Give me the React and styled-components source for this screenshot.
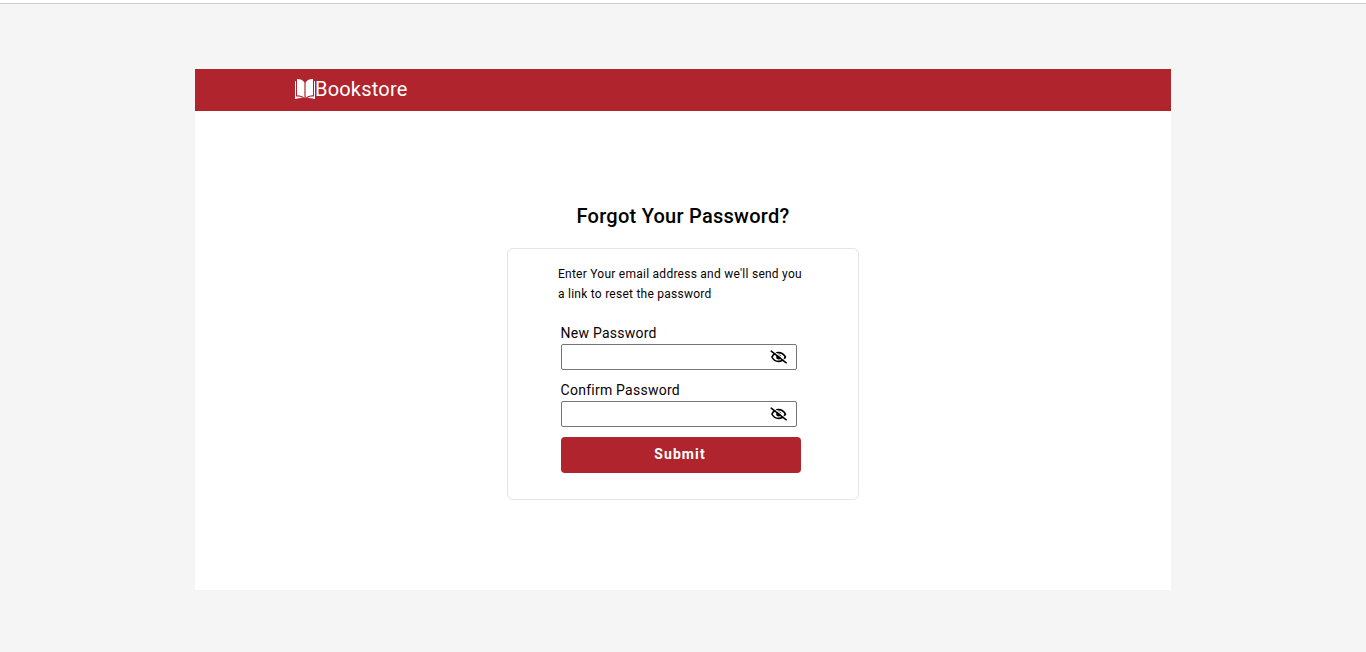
import React from "react";
import styled, { createGlobalStyle } from "styled-components";

const GlobalStyle = createGlobalStyle`
  * { box-sizing: border-box; }
  body {
    margin: 0;
    background: #f5f5f5;
    color: #0a0102;
    font-family: Roboto, "Liberation Sans", sans-serif;
  }
`;

const Page = styled.div`
  height: 652px;
  overflow: hidden;
  border-top: 3px solid #fff;
`;

const Backdrop = styled.div`
  height: 649px;
  padding: 65px 195px 0;
  border-top: 1px solid #cbcbcb;
  background: #f5f5f5;
`;

const Panel = styled.main`
  width: 976px;
  height: 521px;
  background: #fff;
`;

const Header = styled.header`
  display: flex;
  align-items: center;
  height: 42px;
  padding: 0 100px 2px;
  background: #b0242d;
  color: #fff;
`;

const BrandName = styled.span`
  font-size: 20px;
  line-height: 24px;
  letter-spacing: 0.2px;
`;

const Content = styled.section`
  display: flex;
  flex-direction: column;
  align-items: center;
  padding-top: 93px;
`;

const Title = styled.h1`
  margin: 0 0 20px;
  font-size: 20px;
  font-weight: 500;
  line-height: 24px;
  letter-spacing: 0.26px;
  color: #000;
`;

const Card = styled.form`
  width: 352px;
  height: 252px;
  padding: 15px 50px 0;
  border: 1px solid #e4e4e4;
  border-radius: 6px;
`;

const Hint = styled.p`
  margin: 0 0 19px;
  font-size: 12px;
  line-height: 20px;
  letter-spacing: 0.25px;
  white-space: nowrap;
`;

const Field = styled.div`
  display: flex;
  flex-direction: column;
  margin: 0 0 10px 3px;
`;

const Label = styled.label`
  height: 21px;
  margin-left: -0.4px;
  font-size: 14px;
  line-height: 20px;
  letter-spacing: 0.24px;
`;

const InputBox = styled.div`
  display: flex;
  align-items: center;
  width: 236px;
  height: 26px;
  padding-right: 9px;
  border: 1px solid #767676;
  border-radius: 2px;
`;

const Input = styled.input`
  flex: 1;
  min-width: 0;
  border: 0;
  outline: 0;
  background: transparent;
`;

const Submit = styled.button`
  display: block;
  width: 240px;
  height: 36px;
  margin-left: 3px;
  padding: 0 2px 2px 0;
  border: 0;
  border-radius: 4px;
  background: #b0242d;
  color: #fff;
  font: 700 14px/20px Roboto, "Liberation Sans", sans-serif;
  letter-spacing: 1.1px;
`;

const BookIcon = () => (
  <svg width="20" height="20" viewBox="0 0 20 20" fill="#fff" aria-hidden="true">
    <path d="M2 0C5.400 0 8.100 1.200 9.400 3.400v15.600C7.800 17.300 5.400 16.300 2 16.300Z" />
    <path d="M18 0C14.600 0 11.900 1.200 10.600 3.400v15.600c1.600-1.700 4.200-2.700 7.400-2.700Z" />
    <path d="M0 2.200h1v15.300c3 0 5.400.4 7.400 1.700-2.300-.3-5 0-8.400.8Z" />
    <path d="M20 2.200h-1v15.300c-3 0-5.400.4-7.400 1.700 2.300-.3 5 0 8.400.8Z" />
  </svg>
);

const EyeOffIcon = () => (
  <svg width="17" height="14" viewBox="0 0 17 14" fill="none" aria-hidden="true">
    <path
      d="M1.900 7C3.400 4 5.700 2.600 8.500 2.600S13.800 4 15.400 7c-1.600 3-4.100 4.400-6.900 4.400S3.400 10 1.900 7Z"
      stroke="#000"
      strokeWidth="1.600"
    />
    <circle cx="8.700" cy="7" r="2.500" fill="#000" />
    <path d="M2.200 0.200 17 11.800" stroke="#fff" strokeWidth="1.100" />
    <path d="M1.200 1.100 16.200 12.800" stroke="#000" strokeWidth="1.500" strokeLinecap="round" />
  </svg>
);

const PasswordField = ({ id, label }) => (
  <Field>
    <Label htmlFor={id}>{label}</Label>
    <InputBox>
      <Input id={id} type="password" />
      <EyeOffIcon />
    </InputBox>
  </Field>
);

export default function App() {
  return (
    <Page>
      <GlobalStyle />
      <Backdrop>
        <Panel>
          <Header>
            <BookIcon />
            <BrandName>Bookstore</BrandName>
          </Header>
          <Content>
            <Title>Forgot Your Password?</Title>
            <Card>
              <Hint>
                Enter Your email address and we'll send you
                <br />a link to reset the password
              </Hint>
              <PasswordField id="new-password" label="New Password" />
              <PasswordField id="confirm-password" label="Confirm Password" />
              <Submit type="button">Submit</Submit>
            </Card>
          </Content>
        </Panel>
      </Backdrop>
    </Page>
  );
}
